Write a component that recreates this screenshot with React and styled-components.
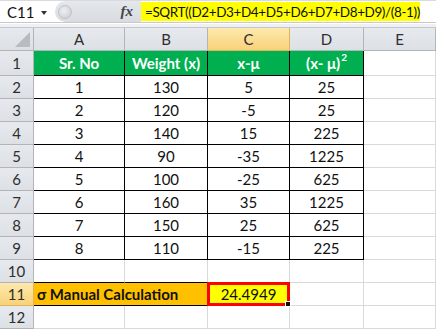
import React from "react";
import styled, { createGlobalStyle, css } from "styled-components";

const Global = createGlobalStyle`
  html, body { margin: 0; padding: 0; background: #fff; overflow: hidden; }
  body { font-family: Lato, "Open Sans", "Liberation Sans", sans-serif; }
`;

const Page = styled.div`
  width: 436px;
  height: 329px;
  overflow: hidden;
  display: flex;
  flex-direction: column;
`;

const FormulaBar = styled.div`
  display: flex;
  align-items: stretch;
  border-top: 1px solid #dadada;
  border-bottom: 1px solid #c8c8c8;
  box-sizing: border-box;
  height: 24px;
  background: #fff;
`;

const NameBox = styled.div`
  width: 55px;
  display: flex;
  align-items: center;
  justify-content: space-between;
  padding: 0 8px 0 7px;
  box-sizing: border-box;
  font-size: 15px;
  color: #111;
`;

const DropArrow = styled.span`
  width: 0;
  height: 0;
  border-left: 3.5px solid transparent;
  border-right: 3.5px solid transparent;
  border-top: 4px solid #333;
  margin-top: 2px;
`;

const Pill = styled.div`
  width: 86px;
  background: linear-gradient(#e4e7eb, #d8dce1);
  border-radius: 11px 0 0 11px;
  display: flex;
  align-items: center;
  justify-content: space-between;
  padding: 0 8px 0 3px;
  box-sizing: border-box;
`;

const Knob = styled.span`
  width: 14px;
  height: 14px;
  border-radius: 50%;
  background: radial-gradient(circle at 40% 40%, #eef0f2, #c5c9ce);
  border: 1px solid #bfc3c8;
  box-sizing: border-box;
`;

const Fx = styled.span`
  font-family: "Liberation Serif", serif;
  font-style: italic;
  font-weight: bold;
  font-size: 15px;
  color: #444;
`;

const FormulaText = styled.div`
  margin: 1px 0;
  width: 279px;
  background: #ffff00;
  font-size: 13.5px;
  letter-spacing: -0.4px;
  color: #111;
  display: flex;
  align-items: center;
  padding-left: 4px;
  box-sizing: border-box;
  white-space: nowrap;
`;

const Strip = styled.div`
  height: 5px;
  background: #eef0f3;
  border-top: 1px solid #fff;
  border-bottom: 1px solid #c4c8cd;
  box-sizing: border-box;
`;

const Grid = styled.div`
  display: grid;
  grid-template-columns: 34px 91px 83px 82px 74px 1fr;
  grid-template-rows: 23px 25px repeat(11, 23px);
`;

const Head = styled.div`
  box-sizing: border-box;
  display: flex;
  align-items: center;
  justify-content: center;
  font-size: 15px;
  color: #2e2e2e;
  border-right: 1px solid #b1b5ba;
  border-bottom: 1px solid #b1b5ba;
  background: linear-gradient(#e6e9ed, #dde1e6);
  ${(p) =>
    p.$sel &&
    css`
      background: linear-gradient(#fde9ad, #f8d27a);
      border-color: #e2b45a;
    `}
`;

const Corner = styled(Head)`
  position: relative;
  &::after {
    content: "";
    position: absolute;
    right: 3px;
    bottom: 3px;
    width: 0;
    height: 0;
    border-left: 15px solid transparent;
    border-bottom: 15px solid #b8bcc1;
  }
`;

const Cell = styled.div`
  box-sizing: border-box;
  display: flex;
  align-items: center;
  justify-content: ${(p) => (p.$left ? "flex-start" : "center")};
  padding-left: ${(p) => (p.$left ? "3px" : "0")};
  font-size: 15px;
  color: ${(p) => p.$fg || "#111"};
  white-space: nowrap;
  background: ${(p) => p.$bg || "#fff"};
  font-weight: ${(p) => (p.$bold ? 700 : 400)};
  border-right: 1px solid ${(p) => p.$r || "#d9d9d9"};
  border-bottom: 1px solid ${(p) => p.$b || "#d9d9d9"};
  ${(p) => p.$span && css`grid-column: span ${p.$span};`}
`;

const Selected = styled.div`
  box-sizing: border-box;
  position: relative;
  margin: -1px 0 0 -1px;
  border: 3px solid #ff0000;
  background: #ffff00;
  display: flex;
  align-items: center;
  justify-content: center;
  font-size: 15px;
  color: #111;
  &::after {
    content: "";
    position: absolute;
    right: -4px;
    bottom: -4px;
    width: 4px;
    height: 4px;
    background: #111;
    border: 1px solid #fff;
  }
`;

const Sup = styled.span`
  font-size: 10px;
  position: relative;
  top: -6px;
  margin-left: 1px;
`;

const rows = [
  [1, 130, 5, 25],
  [2, 120, -5, 25],
  [3, 140, 15, 225],
  [4, 90, -35, 1225],
  [5, 100, -25, 625],
  [6, 160, 35, 1225],
  [7, 150, 25, 625],
  [8, 110, -15, 225],
];

const K = "#000";
const GREEN = "#00b050";

export default function App() {
  return (
    <Page>
      <Global />
      <FormulaBar>
        <NameBox>
          C11 <DropArrow />
        </NameBox>
        <Pill>
          <Knob />
          <Fx>fx</Fx>
        </Pill>
        <FormulaText>=SQRT((D2+D3+D4+D5+D6+D7+D8+D9)/(8-1))</FormulaText>
      </FormulaBar>
      <Strip />
      <Grid>
        <Corner />
        <Head>A</Head>
        <Head>B</Head>
        <Head $sel>C</Head>
        <Head>D</Head>
        <Head>E</Head>

        <Head>1</Head>
        <Cell $bg={GREEN} $fg="#fff" $bold $r={K} $b={K}>Sr. No</Cell>
        <Cell $bg={GREEN} $fg="#fff" $bold $r={K} $b={K}>Weight (x)</Cell>
        <Cell $bg={GREEN} $fg="#fff" $bold $r={K} $b={K}>x-μ</Cell>
        <Cell $bg={GREEN} $fg="#fff" $bold $r={K} $b={K}>
          (x- μ)<Sup>2</Sup>
        </Cell>
        <Cell />

        {rows.map((r, i) => (
          <React.Fragment key={i}>
            <Head>{i + 2}</Head>
            {r.map((v, j) => (
              <Cell key={j} $r={K} $b={K}>{v}</Cell>
            ))}
            <Cell />
          </React.Fragment>
        ))}

        <Head>10</Head>
        <Cell $b={K} />
        <Cell $b={K} />
        <Cell />
        <Cell />
        <Cell />

        <Head $sel>11</Head>
        <Cell $span={2} $left $bold $bg="#ffc000" $r={K} $b={K}>σ Manual Calculation</Cell>
        <Selected>24.4949</Selected>
        <Cell />
        <Cell />

        <Head>12</Head>
        <Cell />
        <Cell />
        <Cell />
        <Cell />
        <Cell />
      </Grid>
    </Page>
  );
}
